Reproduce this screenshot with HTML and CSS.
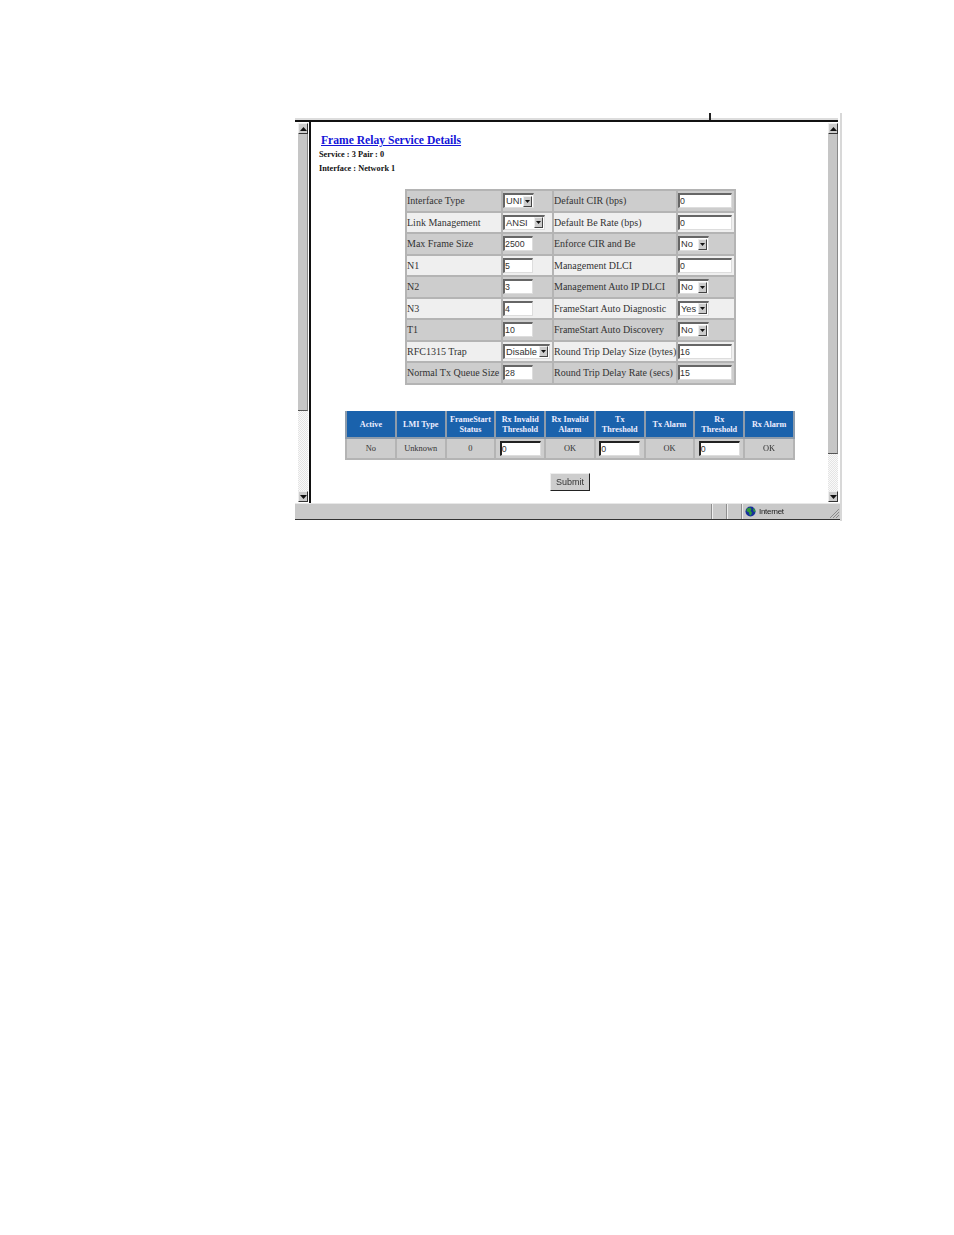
FILE: index.html
```html
<!DOCTYPE html>
<html lang="en">
<head>
<meta charset="utf-8">
<title>Frame Relay Service Details</title>
<link rel="stylesheet" href="styles.css">
</head>
<body>
<div class="window">
  <span class="tick"></span>
  <div class="viewport">
    <div class="scrollbar">
      <button class="sb-btn"><svg width="7" height="4" viewBox="0 0 7 4"><path d="M3.5 0 7 4H0z"/></svg></button>
      <div class="thumb thumb-left"></div>
      <div class="track"></div>
      <button class="sb-btn"><svg width="7" height="4" viewBox="0 0 7 4"><path d="M0 0h7L3.500 4z"/></svg></button>
    </div>
    <main class="content">
      <h1 class="title"><a href="#">Frame Relay Service Details</a></h1>
      <p class="meta">Service : 3 Pair : 0</p>
      <p class="meta meta-second">Interface : Network 1</p>

      <table class="config">
        <colgroup><col class="c1"><col class="c2"><col class="c3"><col class="c4"></colgroup>
        <tr class="dark">
          <td>Interface Type</td>
          <td><span class="select w31"><span>UNI</span><i class="arrow"><svg width="5" height="3" viewBox="0 0 5 3"><path d="M0 0h5L2.500 3z"/></svg></i></span></td>
          <td>Default CIR (bps)</td>
          <td><input class="field wide" value="0"></td>
        </tr>
        <tr class="light">
          <td>Link Management</td>
          <td><span class="select w42"><span>ANSI</span><i class="arrow"><svg width="5" height="3" viewBox="0 0 5 3"><path d="M0 0h5L2.500 3z"/></svg></i></span></td>
          <td>Default Be Rate (bps)</td>
          <td><input class="field wide" value="0"></td>
        </tr>
        <tr class="dark">
          <td>Max Frame Size</td>
          <td><input class="field narrow" value="2500"></td>
          <td>Enforce CIR and Be</td>
          <td><span class="select w31"><span>No</span><i class="arrow"><svg width="5" height="3" viewBox="0 0 5 3"><path d="M0 0h5L2.500 3z"/></svg></i></span></td>
        </tr>
        <tr class="light">
          <td>N1</td>
          <td><input class="field narrow" value="5"></td>
          <td>Management DLCI</td>
          <td><input class="field wide" value="0"></td>
        </tr>
        <tr class="dark">
          <td>N2</td>
          <td><input class="field narrow" value="3"></td>
          <td>Management Auto IP DLCI</td>
          <td><span class="select w31"><span>No</span><i class="arrow"><svg width="5" height="3" viewBox="0 0 5 3"><path d="M0 0h5L2.500 3z"/></svg></i></span></td>
        </tr>
        <tr class="light">
          <td>N3</td>
          <td><input class="field narrow" value="4"></td>
          <td>FrameStart Auto Diagnostic</td>
          <td><span class="select w31"><span>Yes</span><i class="arrow"><svg width="5" height="3" viewBox="0 0 5 3"><path d="M0 0h5L2.500 3z"/></svg></i></span></td>
        </tr>
        <tr class="dark">
          <td>T1</td>
          <td><input class="field narrow" value="10"></td>
          <td>FrameStart Auto Discovery</td>
          <td><span class="select w31"><span>No</span><i class="arrow"><svg width="5" height="3" viewBox="0 0 5 3"><path d="M0 0h5L2.500 3z"/></svg></i></span></td>
        </tr>
        <tr class="light">
          <td>RFC1315 Trap</td>
          <td><span class="select w47"><span>Disable</span><i class="arrow"><svg width="5" height="3" viewBox="0 0 5 3"><path d="M0 0h5L2.500 3z"/></svg></i></span></td>
          <td>Round Trip Delay Size (bytes)</td>
          <td><input class="field wide" value="16"></td>
        </tr>
        <tr class="dark">
          <td>Normal Tx Queue Size</td>
          <td><input class="field narrow" value="28"></td>
          <td>Round Trip Delay Rate (secs)</td>
          <td><input class="field wide" value="15"></td>
        </tr>
      </table>

      <table class="status">
        <tr class="head">
          <th>Active</th>
          <th>LMI Type</th>
          <th>FrameStart<br>Status</th>
          <th>Rx Invalid<br>Threshold</th>
          <th>Rx Invalid<br>Alarm</th>
          <th>Tx<br>Threshold</th>
          <th>Tx Alarm</th>
          <th>Rx<br>Threshold</th>
          <th>Rx Alarm</th>
        </tr>
        <tr class="values">
          <td>No</td>
          <td>Unknown</td>
          <td>0</td>
          <td><input class="field cell" value="0"></td>
          <td>OK</td>
          <td><input class="field cell" value="0"></td>
          <td>OK</td>
          <td><input class="field cell" value="0"></td>
          <td>OK</td>
        </tr>
      </table>

      <div class="actions"><button class="submit">Submit</button></div>
    </main>
    <div class="scrollbar scrollbar-right">
      <button class="sb-btn"><svg width="7" height="4" viewBox="0 0 7 4"><path d="M3.500 0 7 4H0z"/></svg></button>
      <div class="thumb thumb-right"></div>
      <div class="track"></div>
      <button class="sb-btn"><svg width="7" height="4" viewBox="0 0 7 4"><path d="M0 0h7L3.500 4z"/></svg></button>
    </div>
  </div>
  <footer class="statusbar">
    <span class="seg seg-main"></span>
    <span class="seg seg-small"></span>
    <span class="seg seg-small"></span>
    <span class="seg seg-zone">
      <svg width="11" height="11" viewBox="0 0 11 11"><circle cx="5.500" cy="5.500" r="5" fill="#16309a"/><path d="M2 2.500 5 1.500 6.500 3 5.500 5 7 6.500 6 9.500 4.500 9 4 6.500 1.500 5zM8 2l2 1.500.5 2.500-2-.5z" fill="#2f9a3a"/></svg>
      <span class="zone-label">Internet</span>
    </span>
    <svg class="grip" width="11" height="11" viewBox="0 0 11 11"><path d="M10 1 1 10M10 4 4 10M10 7 7 10" stroke="#8a8a8a" fill="none"/></svg>
  </footer>
</div>
</body>
</html>
```
FILE: styles.css
```css
html, body { margin: 0; padding: 0; background: #fff; }
body { height: 1235px; overflow: hidden; padding: 113px 0 0 295px; box-sizing: border-box; font-family: "Liberation Serif", serif; color: #222; }

.window { position: relative; width: 547px; height: 408px; padding-top: 7px; box-sizing: border-box; display: flex; flex-direction: column; border-right: 2px solid #d8d8d8; filter: blur(0.35px); }
.tick { position: absolute; left: 414px; top: 0; width: 2px; height: 7px; background: #222; }

.viewport { height: 381px; margin-right: 2px; display: flex; border-top: 2px solid #111; box-shadow: 0 -2px 0 #ddd; }
.scrollbar { width: 10px; margin-left: 3px; display: flex; flex-direction: column; padding: 1px 0 1px; flex: none; }
.scrollbar-right { margin-left: 0; }
.sb-btn { width: 100%; height: 11px; padding: 0; background: #ccc; border: 1px solid; border-color: #eee #333 #333 #eee; display: flex; align-items: center; justify-content: center; flex: none; }
.sb-btn path { fill: #111; }
.thumb { background: #c6c6c6; border-bottom: 1px solid #555; border-right: 1px solid #888; box-sizing: border-box; flex: none; }
.thumb-left { height: 277px; }
.thumb-right { height: 320px; }
.track { flex: 1; background: repeating-conic-gradient(#e4e4e4 0 25%, #fafafa 0 50%) 0 0 / 2px 2px; }

.content { flex: 1; margin-left: 1px; border-left: 2px solid #111; padding: 12px 0 0 0; display: flex; flex-direction: column; background: #fff; }
.title { margin: 0 0 0 10px; font-size: 11.600px; line-height: 13px; font-weight: bold; }
.title a { color: #1414d8; }
.meta { margin: 1px 0 0 8px; font-size: 8.300px; line-height: 13px; font-weight: bold; color: #111; }

table { border-collapse: collapse; table-layout: fixed; }
.config { margin: 14px 0 0 94px; width: 329px; font-size: 10px; border: 2px solid #999; }
.c1 { width: 96px; } .c2 { width: 51px; } .c3 { width: 124px; } .c4 { width: 58px; }
.config tr { height: 21.500px; }
.config td { padding: 0; border: 2px solid #b4b4b4; white-space: nowrap; color: #333; }
.dark td { background: #cdcdcd; }
.light td { background: #efefef; }

.field { display: block; box-sizing: border-box; height: 15px; margin: 0; padding: 0; background: #fff; border: 1px solid; border-color: #666 #ddd #ddd #666; border-width: 2px 1px 1px 2px; font: 8.800px "Liberation Sans", sans-serif; color: #333; outline: none; }
.narrow { width: 30px; }
.wide { width: 54px; }
.cell { width: 41px; margin: 0 auto; border-color: #222 #ddd #ddd #222; }

.select { display: flex; align-items: center; justify-content: space-between; box-sizing: border-box; height: 15px; padding: 0 1px 0 1px; background: #fff; border: 1px solid; border-width: 2px 1px 1px 2px; border-color: #666 #ddd #ddd #666; font: 9.300px "Liberation Sans", sans-serif; color: #333; }
.w31 { width: 31px; } .w42 { width: 42px; } .w47 { width: 47px; }
.arrow { width: 9px; height: 11px; background: #ccc; border: 1px solid; border-color: #eee #444 #444 #eee; box-sizing: border-box; display: flex; align-items: center; justify-content: center; }
.arrow path { fill: #111; }

.status { margin: 26px 0 0 34px; width: 450px; border: 1px solid #8c8c8c; }
.status th { height: 27px; padding: 2px 0 0; box-sizing: border-box; background: #1a62ac; color: #eef; font-size: 8.200px; line-height: 10px; font-weight: bold; border: 2px solid #8e9cab; border-top: 1px solid #1a62ac; }
.status td { height: 19px; padding: 0; background: #cdcdcd; text-align: center; font-size: 8.400px; color: #333; border: 2px solid #b4b4b4; }

.actions { margin-top: 13px; margin-left: 239px; }
.submit { display: block; width: 40px; height: 18px; padding: 0; background: #cdcdcd; border: 1px solid; border-color: #eee #222 #222 #eee; font: 9px "Liberation Sans", sans-serif; color: #333; }

.statusbar { height: 17px; background: #c9c9c9; border-top: 1px solid #e8e8e8; border-bottom: 1px solid #333; box-sizing: border-box; display: flex; align-items: stretch; position: relative; }
.seg { border-right: 1px solid #8e8e8e; box-shadow: 1px 0 0 #eee; box-sizing: border-box; }
.seg-main { width: 417px; }
.seg-small { width: 15px; }
.seg-zone { flex: 1; border: 0; box-shadow: none; display: flex; align-items: center; gap: 3px; padding-left: 3px; }
.zone-label { font: 8px "Liberation Sans", sans-serif; letter-spacing: -0.300px; color: #222; }
.grip { position: absolute; right: 0; bottom: 0; }
```
